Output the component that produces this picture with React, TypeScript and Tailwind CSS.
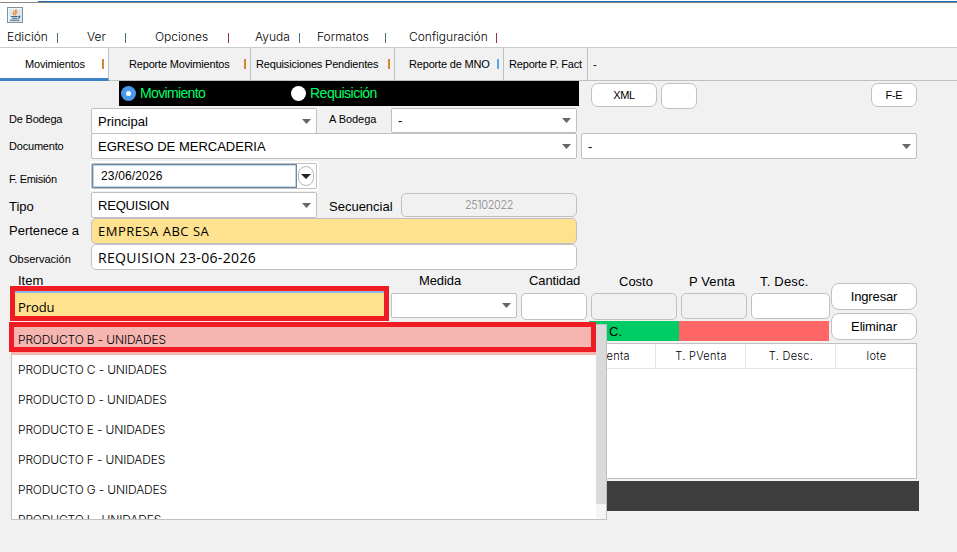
import clsx from 'clsx';
import type { ReactNode } from 'react';

const menus = [
  { label: 'Edición', box: 'pl-[7px] w-[58px]', mark: 'bg-[#4c6f78]' },
  { label: 'Ver', box: 'pl-[29px] w-[68px]', mark: 'bg-[#4c6f78]' },
  { label: 'Opciones', box: 'pl-[29px] w-[103px]', mark: 'bg-[#8a3050]' },
  { label: 'Ayuda', box: 'pl-[26px] w-[71px]', mark: 'bg-[#4c6f78]' },
  { label: 'Formatos', box: 'pl-[17px] w-[86px]', mark: 'bg-[#4c6f78]' },
  { label: 'Configuración', box: 'pl-[23px] w-[111px]', mark: 'bg-[#8a3050]' },
];

const tabs = [
  { label: 'Movimientos', box: 'w-[109px] pl-[25px]', mark: 'bg-[#d8842c]', active: true },
  { label: 'Reporte Movimientos', box: 'w-[142px] pl-[20px]', mark: 'bg-[#d8842c]' },
  { label: 'Requisiciones Pendientes', box: 'w-[144px] pl-[5px]', mark: 'bg-[#d8842c]' },
  { label: 'Reporte de MNO', box: 'w-[109px] pl-[14px]', mark: 'bg-[#5aa5ea]' },
  { label: 'Reporte P. Fact', box: 'w-[84px] pl-[5px]' },
];

const products = ['B', 'C', 'D', 'E', 'F', 'G', 'I'];

const Arrow = ({ className }: { className?: string }) => (
  <svg viewBox="0 0 9 5" className={clsx('h-[5px] w-[9px] shrink-0 fill-[#666666]', className)}>
    <path d="M0 0h9L4.5 5z" />
  </svg>
);

const Combo = ({ className, children }: { className?: string; children?: ReactNode }) => (
  <div
    className={clsx(
      'flex shrink-0 items-center justify-between rounded-[2px] border border-[#c0c0c0] bg-white pr-[5px] pl-[6px] text-[13px] leading-none',
      className
    )}
  >
    <span>{children}</span>
    <Arrow />
  </div>
);

const Field = ({ className, children }: { className?: string; children?: ReactNode }) => (
  <div className={clsx('flex shrink-0 items-center rounded-[5px] border border-[#c0c0c0]', className)}>{children}</div>
);

const ActionButton = ({ className, children }: { className?: string; children?: ReactNode }) => (
  <button className={clsx('flex shrink-0 items-center justify-center border border-[#c0c0c0] bg-white', className)}>
    {children}
  </button>
);

const Label = ({ className, children }: { className?: string; children: ReactNode }) => (
  <span className={clsx('shrink-0 whitespace-nowrap leading-none', className)}>{children}</span>
);

const JavaIcon = () => (
  <svg viewBox="0 0 16 16" className="h-4 w-4" fill="none">
    <rect x="0.5" y="0.5" width="15" height="15" fill="#dfe8ee" stroke="#7d92a3" />
    <path d="M1.5 14.5v-13h13" stroke="#f8fbfc" />
    <path
      d="M9.4 2.4C9 4 6.4 4.6 6.3 6.2c0 .8.7 1.2 1 2M10.6 4.6C8.8 5.2 8.2 6 8.7 6.8c.3.5.1.9-.3 1.4"
      stroke="#e9852f"
      strokeWidth="1.3"
    />
    <path
      d="M4 9.5h6.6M5 11.3h5M11 9.3c2.8-.5 2.4 1.7-.3 2.1M3.2 13.2h9.2"
      stroke="#3f6580"
      strokeWidth="1.1"
    />
  </svg>
);

const MenuBar = () => (
  <nav className="flex h-5 items-center pt-px font-[Inter] text-[12px] font-light text-black">
    {menus.map(menu => (
      <div key={menu.label} className={clsx('flex shrink-0 items-center justify-between leading-none', menu.box)}>
        <span className="pb-px">{menu.label}</span>
        <span className={clsx('h-[10px] w-px', menu.mark)} />
      </div>
    ))}
  </nav>
);

const TabBar = () => (
  <div className="flex h-[33px] border-b border-[#c0c0c0] bg-[#f1f1f1] text-[11px]">
    {tabs.map(tab => (
      <div
        key={tab.label}
        className={clsx(
          'flex shrink-0 items-center justify-between border-r border-[#c0c0c0] pr-1',
          tab.box,
          tab.active && 'mb-[-1px] border-b-[3px] border-b-[#3c80c5] bg-white pt-[2px]'
        )}
      >
        <span className="whitespace-nowrap tracking-[-0.18px]">{tab.label}</span>
        {tab.mark && <span className={clsx('h-[10px] w-[2px]', tab.mark)} />}
      </div>
    ))}
    <span className="self-center pl-[5px]">-</span>
  </div>
);

const ModeBar = () => (
  <div className="flex h-[27px] items-start">
    <div className="ml-[119px] flex h-[25px] w-[460px] shrink-0 items-center bg-black text-[14px] text-[#00ff66]">
      <span className="ml-[2px] flex h-[15px] w-[15px] items-center justify-center rounded-full bg-[#4a98e8]">
        <span className="h-[5px] w-[5px] rounded-full bg-white" />
      </span>
      <span className="ml-1 w-[151px] tracking-[-0.65px]">Movimiento</span>
      <span className="h-[15px] w-[15px] rounded-full bg-white" />
      <span className="ml-1 tracking-[-0.5px]">Requisición</span>
    </div>
    <ActionButton className="mt-[2px] ml-3 h-6 w-[66px] rounded-[7px] text-[11px] tracking-[-0.3px]">XML</ActionButton>
    <ActionButton className="mt-[2px] ml-1 h-[26px] w-9 rounded-[7px]" />
    <ActionButton className="mt-[2px] ml-[174px] h-6 w-[46px] rounded-[7px] text-[11px] tracking-[-0.3px]">
      F-E
    </ActionButton>
  </div>
);

const HeaderForm = () => (
  <div className="flex flex-col">
    <div className="flex h-[25px]">
      <Label className="w-[91px] pt-[6px] pl-[9px] text-[11px] tracking-[-0.2px]">De Bodega</Label>
      <Combo className="h-[26px] w-[226px]">Principal</Combo>
      <Label className="w-[74px] pt-[6px] pl-3 text-[11px] tracking-[-0.05px]">A Bodega</Label>
      <Combo className="h-[25px] w-[186px]">-</Combo>
    </div>
    <div className="flex h-[28px]">
      <Label className="w-[91px] pt-2 pl-[9px] text-[11px] tracking-[-0.2px]">Documento</Label>
      <Combo className="h-[26px] w-[486px]">EGRESO DE MERCADERIA</Combo>
      <Combo className="ml-1 h-[26px] w-[336px]">-</Combo>
    </div>
    <div className="flex h-[31px]">
      <Label className="w-[90px] pt-[13px] pl-[9px] text-[11px] tracking-[-0.3px]">F. Emisión</Label>
      <div className="flex h-[30px] w-[229px] items-center bg-white pl-px">
        <div className="flex h-[26px] w-[226px] items-center rounded-[2px] border border-[#c0c0c0]">
          <div className="flex h-6 w-[205px] items-center border border-[#74879b] pl-[8px] text-[12px] shadow-[inset_0_0_0_1px_#bcd5ee]">
            <span className="tracking-[0.15px]">23/06/2026</span>
          </div>
          <span className="ml-px flex h-5 w-4 items-center justify-center rounded-full border border-[#b8b8b8]">
            <svg viewBox="0 0 10 5" className="h-[5px] w-[10px] shrink-0 fill-[#222222]">
              <path d="M0 0h10L5 5z" />
            </svg>
          </span>
        </div>
      </div>
    </div>
    <div className="flex h-[26px]">
      <Label className="w-[91px] pt-[8px] pl-[9px] text-[13px]">Tipo</Label>
      <Combo className="h-[26px] w-[226px] tracking-[-0.2px]">REQUISION</Combo>
      <Label className="w-[84px] pt-[8px] pl-3 text-[13px]">Secuencial</Label>
      <Field className="mt-px h-6 w-[176px] justify-center bg-[#f1f1f1] font-[Inter] text-[11px] font-light tracking-[-0.4px] text-[#888888]">
        25102022
      </Field>
    </div>
    <div className="flex h-[26px]">
      <Label className="w-[91px] pt-[6px] pl-[9px] text-[13px]">Pertenece a</Label>
      <Field className="h-[26px] w-[486px] bg-[#ffe28f] pt-[2px] pl-[6px] font-['Open_Sans'] text-[13px] tracking-[0.5px]">
        EMPRESA ABC SA
      </Field>
    </div>
    <div className="flex h-[26px]">
      <Label className="w-[91px] pt-[10px] pl-[9px] text-[11px]">Observación</Label>
      <Field className="h-[26px] w-[486px] bg-white pl-[6px] font-['Open_Sans'] text-[14px] tracking-[0.35px]">
        REQUISION 23-06-2026
      </Field>
    </div>
  </div>
);

const ItemEntry = () => (
  <div className="flex h-[73px]">
    <div className="flex w-[831px] shrink-0 flex-col">
      <div className="flex h-[23px] pt-1 text-[13px]">
        <Label className="w-[391px] pl-[18px]">Item</Label>
        <Label className="w-[130px] pl-7 tracking-[-0.1px]">Medida</Label>
        <Label className="w-[90px] pl-2 tracking-[-0.1px]">Cantidad</Label>
        <Label className="w-[70px] pt-px pl-2">Costo</Label>
        <Label className="w-[70px] pt-px pl-2 tracking-[0.1px]">P Venta</Label>
        <Label className="pt-px pl-[9px] tracking-[0.2px]">T. Desc.</Label>
      </div>
      <div className="flex h-7 items-start">
        <div className="mt-[-7px] mr-[2px] ml-[10px] flex h-[35px] w-[379px] shrink-0 items-center border-[5px] border-[#ef1c24] bg-[#ffe28f] pt-[8px] pl-[3px] font-['Open_Sans'] text-[13px] tracking-[-0.1px] shadow-[inset_0_2px_0_#8dbbe8]">
          Produ
        </div>
        <Combo className="h-[25px] w-[126px]" />
        <Field className="ml-1 h-[27px] w-[66px] bg-white" />
        <Field className="ml-1 h-[27px] w-[86px] bg-[#f1f1f1]" />
        <Field className="ml-1 h-[26px] w-[66px] bg-[#f1f1f1]" />
        <Field className="ml-1 h-[26px] w-[79px] bg-white" />
      </div>
      <div className="ml-[589px] flex h-5 w-60 text-[13px] leading-[21px]">
        <span className="w-[90px] bg-[#00cc66] pl-[20px]">C.</span>
        <span className="flex-1 bg-[#ff6666]" />
      </div>
    </div>
    <div className="flex flex-col gap-[3px] pt-[13px] text-[13px] tracking-[-0.15px]">
      <ActionButton className="h-[27px] w-[86px] rounded-[8px]">Ingresar</ActionButton>
      <ActionButton className="h-[27px] w-[86px] rounded-[8px]">Eliminar</ActionButton>
    </div>
  </div>
);

const DetailTable = () => (
  <div>
    <div className="ml-[11px] h-[136px] w-[906px] border border-[#c0c0c0] bg-white">
      <div className="flex h-[25px] justify-end border-b border-[#e5e5e5] font-[Inter] text-[11px] font-light tracking-[0.3px]">
        {['P.Venta', 'T. PVenta', 'T. Desc.', 'lote'].map(column => (
          <div
            key={column}
            className="flex w-[90px] items-center justify-center border-r border-[#e5e5e5] pl-px first:pr-[2px] first:pl-0 last:w-20 last:border-r-0"
          >
            {column}
          </div>
        ))}
      </div>
    </div>
    <div className="mt-[2px] ml-[11px] h-[30px] w-[908px] bg-[#3d3d3d]" />
  </div>
);

const ProductPopup = () => (
  <div className="absolute top-[324px] left-[11px] flex h-[196px] w-[596px] border border-[#c0c0c0] bg-white">
    <ul className="flex-1 overflow-hidden font-[Inter] text-[12px] font-light tracking-[-0.15px]">
      {products.map((letter, i) => (
        <li
          key={letter}
          className={clsx('flex h-[30px] items-center pl-[6px] whitespace-nowrap', 0 === i && 'bg-[#f5b6b1]')}
        >
          PRODUCTO {letter} - UNIDADES
        </li>
      ))}
    </ul>
    <div className="w-[10px] bg-[#f5f5f5]">
      <div className="h-[179px] bg-[#dadada]" />
    </div>
  </div>
);

export default function App() {
  return (
    <main className="relative h-[552px] w-[957px] overflow-hidden bg-[#f1f1f1] font-['Liberation_Sans',sans-serif] text-black">
      <header className="h-12 border-b border-[#cccccc] bg-white">
        <div className="h-[3px] border-b border-[#888888] pt-px">
          <div className="ml-[38px] h-px bg-[#1768b3]" />
        </div>
        <div className="h-6 pt-1 pl-[7px]">
          <JavaIcon />
        </div>
        <MenuBar />
      </header>
      <TabBar />
      <ModeBar />
      <HeaderForm />
      <ItemEntry />
      <DetailTable />
      <ProductPopup />
      <div className="absolute top-[322px] left-[9px] h-[30px] w-[587px] border-[5px] border-[#ef1c24]" />
    </main>
  );
}
